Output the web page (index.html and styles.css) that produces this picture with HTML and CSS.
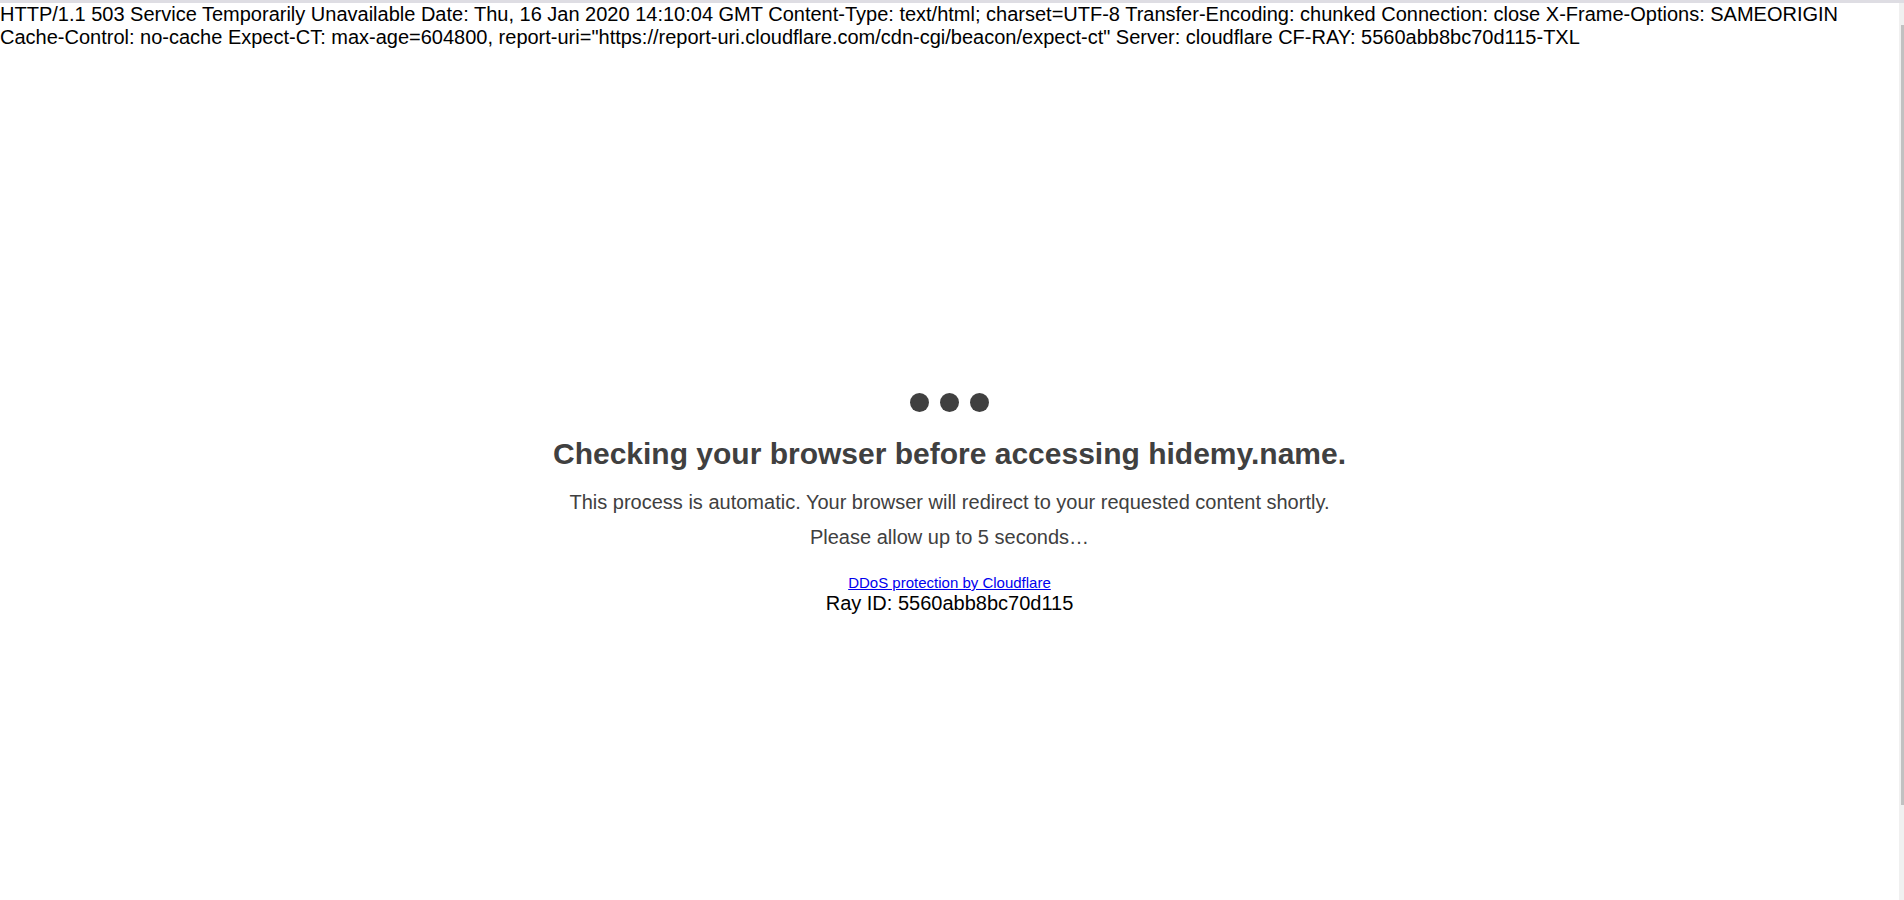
FILE: index.html
```html
<!DOCTYPE html>
<html lang="en">
<head>
    <meta charset="UTF-8">
    <title>Just a moment...</title>
    <link rel="stylesheet" href="styles.css">
</head>
<body>
    <div class="frame-top"></div>
    <div class="window">
        <div class="viewport">
            <div class="headers">HTTP/1.1 503 Service Temporarily Unavailable Date: Thu, 16 Jan 2020 14:10:04 GMT Content-Type: text/html; charset=UTF-8 Transfer-Encoding: chunked Connection: close X-Frame-Options: SAMEORIGIN Cache-Control: no-cache Expect-CT: max-age=604800, report-uri="https://report-uri.cloudflare.com/cdn-cgi/beacon/expect-ct" Server: cloudflare CF-RAY: 5560abb8bc70d115-TXL</div>
            <div class="center">
                <div class="verification">
                    <div class="bubbles-row">
                        <span class="bubble"></span>
                        <span class="bubble"></span>
                        <span class="bubble"></span>
                    </div>
                    <h1>Checking your browser before accessing hidemy.name.</h1>
                    <p>This process is automatic. Your browser will redirect to your requested content shortly.</p>
                    <p>Please allow up to 5 seconds&hellip;</p>
                    <div class="attribution">
                        <a href="#">DDoS protection by Cloudflare</a><br>
                        Ray ID: 5560abb8bc70d115
                    </div>
                </div>
            </div>
        </div>
        <div class="scrollbar">
            <div class="scroll-thumb"></div>
        </div>
    </div>
</body>
</html>
```

FILE: styles.css
```css
html, body {
    margin: 0;
    padding: 0;
    height: 100%;
    overflow: hidden;
}

body {
    background-color: #ffffff;
    font-family: "Liberation Sans", Arial, Helvetica, sans-serif;
    font-size: 20px;
    color: #000000;
    display: flex;
    flex-direction: column;
}

.frame-top {
    height: 3px;
    background-color: #dedde3;
    flex-shrink: 0;
}

.window {
    flex: 1;
    display: flex;
    min-height: 0;
}

.viewport {
    flex: 1;
    overflow: hidden;
}

.scrollbar {
    width: 5px;
    background-color: #f0f0f0;
    flex-shrink: 0;
}

.scroll-thumb {
    margin: 22px 0 0 2px;
    width: 3px;
    height: 780px;
    background-color: #c1c1c1;
}

.headers {
    line-height: 23px;
}

.center {
    height: 897px;
    padding-top: 8px;
    box-sizing: border-box;
    display: flex;
    align-items: center;
    justify-content: center;
    text-align: center;
}

.bubbles-row {
    line-height: 23px;
}

.bubble {
    display: inline-block;
    width: 19px;
    height: 19px;
    margin: 2.5px;
    border-radius: 100%;
    background-color: #404040;
}

h1 {
    font-size: 30px;
    color: #404040;
    margin: 17.5px 0 20px;
}

p {
    font-size: 20px;
    color: #404040;
    margin: 12.5px 0 0 0;
}

.attribution {
    margin-top: 22px;
    line-height: 20px;
}

.attribution a {
    font-size: 15px;
    color: #0000ee;
}
```
